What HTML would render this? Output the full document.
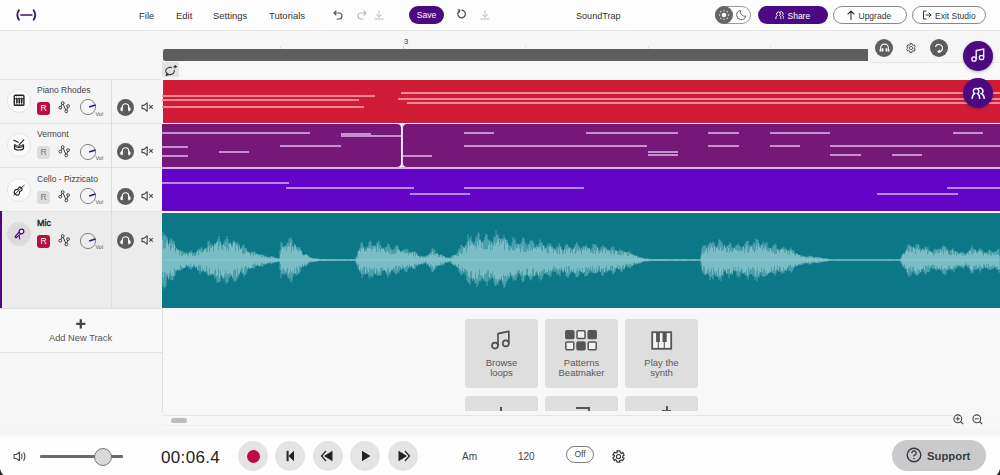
<!DOCTYPE html><html><head><meta charset="utf-8"><style>
*{margin:0;padding:0;box-sizing:border-box}
html,body{width:1000px;height:475px;overflow:hidden;background:#f6f6f6;font-family:"Liberation Sans",sans-serif;color:#333}
.a{position:absolute}
.menu{font-size:9.5px;color:#333;top:10px;line-height:11px}
.pill{border-radius:10px;height:18px;top:6px}
.tn{font-size:8.5px;color:#444;line-height:10px}
.rb{width:13px;height:13px;border-radius:3px;font-size:8.5px;line-height:13px;text-align:center;color:#fff;background:#b8103f}
.rg{background:#dcdcdc;color:#7a7a7a}
.circ{border-radius:50%}
</style></head><body>
<div class="a" style="left:0;top:0;width:1000px;height:31px;background:#fdfdfd;border-bottom:1px solid #e4e4e4"></div>
<svg class="a" style="left:14px;top:8px" width="26" height="14" viewBox="0 0 26 14">
 <path d="M5,2.3 Q1.6,7 5,11.7" stroke="#3a1266" stroke-width="1.8" fill="none" stroke-linecap="round"/>
 <path d="M7,7 H17.8" stroke="#3a1266" stroke-width="1.7" stroke-linecap="round"/>
 <path d="M19.6,2.3 Q23,7 19.6,11.7" stroke="#3a1266" stroke-width="1.8" fill="none" stroke-linecap="round"/>
</svg>
<div class="a menu" style="left:139px;">File</div>
<div class="a menu" style="left:176px;">Edit</div>
<div class="a menu" style="left:213px;">Settings</div>
<div class="a menu" style="left:269px;">Tutorials</div>
<div class="a menu" style="left:576px;font-size:9.1px;top:10.8px">SoundTrap</div>
<svg class="a" style="left:333px;top:10px" width="10" height="10" viewBox="0 0 10 10"><g><path d="M3,1 L1,3 L3,5 M1,3 H6 A3,3 0 0 1 6,9 H4" stroke="#555" stroke-width="1.1" fill="none" stroke-linecap="round" stroke-linejoin="round"/></g></svg>
<svg class="a" style="left:357px;top:10px" width="10" height="10" viewBox="0 0 10 10"><g transform="translate(10,0) scale(-1,1)"><path d="M3,1 L1,3 L3,5 M1,3 H6 A3,3 0 0 1 6,9 H4" stroke="#bbb" stroke-width="1.1" fill="none" stroke-linecap="round" stroke-linejoin="round"/></g></svg>
<svg class="a" style="left:374px;top:10px" width="10" height="10" viewBox="0 0 10 10"><path d="M5,1 V7 M2.5,4.5 L5,7 L7.5,4.5 M1,9 H9" stroke="#bbb" stroke-width="1" fill="none" stroke-linecap="round"/></svg>
<svg class="a" style="left:480px;top:10px" width="10" height="10" viewBox="0 0 10 10"><path d="M5,1 V7 M2.5,4.5 L5,7 L7.5,4.5 M1,9 H9" stroke="#bbb" stroke-width="1" fill="none" stroke-linecap="round"/></svg>
<div class="a pill" style="left:409px;width:35px;background:#4b0a82;color:#fff;font-size:8.6px;text-align:center;line-height:19.5px">Save</div>
<svg class="a" style="left:457px;top:9px" width="10" height="10" viewBox="0 0 10 10"><path d="M2,2.2 A3.8,3.8 0 1 0 5,1.2" stroke="#444" stroke-width="1.2" fill="none" stroke-linecap="round"/><path d="M1,0.8 L2.8,1 L2.6,3" stroke="#444" stroke-width="1.1" fill="none" stroke-linecap="round" stroke-linejoin="round"/></svg>
<div class="a" style="left:715px;top:6px;width:36px;height:18px;border-radius:9px;border:1px solid #999;background:#fff"></div>
<div class="a circ" style="left:715px;top:6px;width:18px;height:18px;background:#666"></div>
<svg class="a" style="left:717px;top:8px" width="14" height="14" viewBox="0 0 14 14"><circle cx="7" cy="7" r="2.3" fill="#f4f4f4"/><circle cx="11.50" cy="7.00" r="0.75" fill="#e0e0e0"/><circle cx="10.18" cy="10.18" r="0.75" fill="#e0e0e0"/><circle cx="7.00" cy="11.50" r="0.75" fill="#e0e0e0"/><circle cx="3.82" cy="10.18" r="0.75" fill="#e0e0e0"/><circle cx="2.50" cy="7.00" r="0.75" fill="#e0e0e0"/><circle cx="3.82" cy="3.82" r="0.75" fill="#e0e0e0"/><circle cx="7.00" cy="2.50" r="0.75" fill="#e0e0e0"/><circle cx="10.18" cy="3.82" r="0.75" fill="#e0e0e0"/></svg>
<svg class="a" style="left:735px;top:9px" width="12" height="12" viewBox="0 0 12 12"><path d="M5.5,1.5 A4.6,4.6 0 1 0 10.7,7.2 A4.6,4.6 0 0 1 5.5,1.5 Z" stroke="#666" stroke-width="1" fill="none" stroke-linejoin="round"/></svg>
<div class="a pill" style="left:758px;width:70px;background:#4b0a82"></div>
<svg class="a" style="left:774.5px;top:10.8px" width="9.84" height="8.2" viewBox="0 0 12 10"><path d="M1,9.5 C1,7 2,6 3,5.5 A2.3,2.3 0 1 1 5.5,5.5 C6.5,6 7.2,7 7.2,9.5 M6.2,1.2 A2.3,2.3 0 0 1 8.7,5.5 C9.7,6 11,7 11,9.5" stroke="#fff" stroke-width="1.2" fill="none" stroke-linecap="round"/></svg>
<div class="a" style="left:787.5px;top:10.5px;font-size:8.5px;color:#fff;line-height:10px">Share</div>
<div class="a pill" style="left:833px;width:74px;border:1px solid #888;background:#fff"></div>
<svg class="a" style="left:847px;top:10px" width="8" height="10" viewBox="0 0 8 10"><path d="M4,9.5 V1 M1,4 L4,1 L7,4" stroke="#333" stroke-width="1.1" fill="none" stroke-linecap="round"/></svg>
<div class="a" style="left:858.5px;top:10.5px;font-size:8.5px;color:#333;line-height:10px">Upgrade</div>
<div class="a pill" style="left:912px;width:74px;border:1px solid #888;background:#fff"></div>
<svg class="a" style="left:922px;top:10px" width="10" height="10" viewBox="0 0 10 10"><path d="M4,1 H1.5 V9 H4 M4,5 H9 M7,3 L9,5 L7,7" stroke="#333" stroke-width="1" fill="none" stroke-linecap="round" stroke-linejoin="round"/></svg>
<div class="a" style="left:935px;top:10.5px;font-size:8.5px;color:#333;line-height:10px">Exit Studio</div>
<div class="a" style="left:163px;top:49px;width:705px;height:12px;background:#5e5e5e;border-radius:2.5px 0 0 2.5px"></div>
<div class="a" style="left:179px;top:62px;width:821px;height:17px;background:#f8f8f8"></div>
<div class="a" style="left:868px;top:62px;width:132px;height:1px;background:#e6e6e6"></div>
<div class="a" style="left:280px;top:45.5px;width:1px;height:3.5px;background:#e2e2e2"></div>
<div class="a" style="left:402.5px;top:45.5px;width:1px;height:3.5px;background:#c8c8c8"></div>
<div class="a" style="left:525px;top:45.5px;width:1px;height:3.5px;background:#e2e2e2"></div>
<div class="a" style="left:647.5px;top:45.5px;width:1px;height:3.5px;background:#e2e2e2"></div>
<div class="a" style="left:770px;top:45.5px;width:1px;height:3.5px;background:#e2e2e2"></div>
<div class="a" style="left:404px;top:37.5px;font-size:7.5px;color:#333;line-height:8px">3</div>
<div class="a circ" style="left:875.2px;top:38.8px;width:18px;height:18px;background:#5e5e5e"></div>
<svg class="a" style="left:878.7px;top:43.3px" width="11" height="9" viewBox="0 0 11 9"><path d="M1.6,8.5 V5 A3.9,3.9 0 0 1 9.4,5 V8.5" stroke="#fff" stroke-width="1.1" fill="none"/><rect x="2.6" y="5.2" width="1.8" height="3.4" rx="0.4" fill="#fff"/><rect x="6.6" y="5.2" width="1.8" height="3.4" rx="0.4" fill="#fff"/><path d="M1.1,6 V8.6 M9.9,6 V8.6" stroke="#fff" stroke-width="1"/></svg>
<svg class="a" style="left:906.4px;top:42.9px" width="10" height="10" viewBox="0 0 10 10"><path d="M3.81,0.66 L6.19,0.66 L6.47,2.04 L7.40,2.73 L8.16,1.80 L9.35,3.86 L8.29,4.79 L8.16,5.94 L9.35,6.14 L8.16,8.20 L6.83,7.75 L5.77,8.21 L6.19,9.34 L3.81,9.34 L3.53,7.96 L2.60,7.27 L1.84,8.20 L0.65,6.14 L1.71,5.21 L1.84,4.06 L0.65,3.86 L1.84,1.80 L3.17,2.25 L4.23,1.79 Z" stroke="#555" stroke-width="1.0" fill="none" stroke-linejoin="round"/><circle cx="5.0" cy="5.0" r="1.60" stroke="#555" stroke-width="0.9" fill="none"/></svg>
<div class="a circ" style="left:930px;top:38.8px;width:18px;height:18px;background:#5e5e5e"></div>
<svg class="a" style="left:934px;top:43px" width="10" height="10" viewBox="0 0 10 10"><path d="M1.6,3.6 A3.6,3.6 0 1 1 4.6,8.7" stroke="#fff" stroke-width="1.1" fill="none" stroke-linecap="round"/><path d="M5.6,10 L3.8,8.6 L5.6,7.2" stroke="#fff" stroke-width="1.1" fill="none" stroke-linecap="round" stroke-linejoin="round"/></svg>
<div class="a" style="left:162px;top:62px;width:17px;height:15px;background:#e2e2e2;border-radius:0 0 2px 2px"></div>
<svg class="a" style="left:163.5px;top:63.5px" width="14" height="13" viewBox="0 0 14 13"><path d="M10.23,6.37 A4.3,3.6 0 1 1 7.47,3.62" stroke="#333" stroke-width="1.05" fill="none" stroke-linecap="round"/><path d="M3.2,9.3 L2.1,11.6 L5,10.5" stroke="#333" stroke-width="1.05" fill="none" stroke-linejoin="round" stroke-linecap="round"/><path d="M11.2,0.9 V4.3 M9.5,2.6 H12.9" stroke="#333" stroke-width="1.1"/></svg>
<div class="a" style="left:0;top:79px;width:162px;height:44px;background:#f5f5f5;border-top:1px solid #e2e2e2"></div>
<div class="a" style="left:111px;top:79px;width:1px;height:44px;background:#dedede"></div>
<div class="a circ" style="left:7px;top:89px;width:24px;height:24px;background:#fbfbfb;border:1px solid #e4e4e4"></div>
<svg class="a" style="left:12.5px;top:94px" width="12" height="12" viewBox="0 0 12 12"><rect x="1.3" y="1.3" width="9.6" height="10" rx="0.9" fill="#fff" stroke="#222" stroke-width="1.4"/><path d="M1.3,4.7 H10.9" stroke="#222" stroke-width="1"/><circle cx="3.6" cy="3" r="0.55" fill="#222"/><circle cx="6.1" cy="3" r="0.55" fill="#222"/><circle cx="8.6" cy="3" r="0.55" fill="#222"/><rect x="3.1" y="4.7" width="1.6" height="4.4" fill="#222"/><rect x="5.5" y="4.7" width="1.6" height="4.4" fill="#222"/><rect x="7.9" y="4.7" width="1.6" height="4.4" fill="#222"/><path d="M3.9,9 V11 M6.3,9 V11 M8.7,9 V11" stroke="#222" stroke-width="0.7"/></svg>
<div class="a tn" style="left:37px;top:85px;">Piano Rhodes</div>
<div class="a rb" style="left:37px;top:102px">R</div>
<svg class="a" style="left:58px;top:100px" width="12" height="14" viewBox="0 0 12 14"><path d="M2.3,7.7 L4.7,3.1 L8.3,11.4 L10.1,6.1" stroke="#3a3a3a" stroke-width="1" fill="none"/><circle cx="2.3" cy="7.7" r="1.4" fill="#f5f5f5" stroke="#3a3a3a" stroke-width="0.95"/><circle cx="4.7" cy="3.1" r="1.4" fill="#f5f5f5" stroke="#3a3a3a" stroke-width="0.95"/><circle cx="8.3" cy="11.4" r="1.4" fill="#f5f5f5" stroke="#3a3a3a" stroke-width="0.95"/><circle cx="10.1" cy="6.1" r="1.4" fill="#f5f5f5" stroke="#3a3a3a" stroke-width="0.95"/></svg>
<svg class="a" style="left:79px;top:98.4px" width="18" height="18" viewBox="0 0 18 18"><circle cx="9" cy="9" r="7.6" stroke="#777" stroke-width="0.9" fill="none"/><path d="M10.2,9 L16.5,7" stroke="#3a0a78" stroke-width="1.6"/></svg>
<div class="a" style="left:95.5px;top:110.5px;font-size:5.5px;color:#555;line-height:6px">Vol</div>
<div class="a circ" style="left:117px;top:99px;width:17px;height:17px;background:#5c5c5c"></div>
<svg class="a" style="left:119px;top:101px" width="13" height="12" viewBox="0 0 13 12"><path d="M3.3,9.5 V6 A3.2,3.2 0 0 1 9.7,6 V9.5" stroke="#fff" stroke-width="1.1" fill="none"/><path d="M3.3,5.8 Q1.2,6.5 1.2,8.3 Q1.2,10.2 3.5,10.5 Z M9.7,5.8 Q11.8,6.5 11.8,8.3 Q11.8,10.2 9.5,10.5 Z" fill="#fff"/></svg>
<svg class="a" style="left:141px;top:102px" width="13" height="10" viewBox="0 0 13 10"><path d="M1,3.4 H3 L6.2,0.8 V9.2 L3,6.6 H1 Z" stroke="#4a4a4a" stroke-width="1.15" fill="none" stroke-linejoin="round"/><path d="M8.3,3.2 L11.7,6.6 M11.7,3.2 L8.3,6.6" stroke="#4a4a4a" stroke-width="1.1"/></svg>
<div class="a" style="left:0;top:123px;width:162px;height:44px;background:#f5f5f5;border-top:1px solid #e2e2e2"></div>
<div class="a" style="left:111px;top:123px;width:1px;height:44px;background:#dedede"></div>
<div class="a circ" style="left:7px;top:133.4px;width:24px;height:24px;background:#fbfbfb;border:1px solid #e4e4e4"></div>
<svg class="a" style="left:13px;top:139.4px" width="12" height="12" viewBox="0 0 12 12"><path d="M1.5,5.5 V9 Q1.5,11 6,11 Q10.5,11 10.5,9 V5.5" stroke="#222" stroke-width="1.2" fill="none"/><path d="M1.5,7.6 Q6,9.6 10.5,7.6" stroke="#222" stroke-width="1" fill="none"/><path d="M2.6,5.2 Q1.5,5.8 2.5,6.6 Q6,7.8 9.5,6.6 Q10.5,5.8 9.4,5.2" stroke="#222" stroke-width="1" fill="none"/><path d="M0.8,1.2 L5.3,3.2 M10.8,0.8 L6.2,5.8" stroke="#222" stroke-width="1.1" stroke-linecap="round"/></svg>
<div class="a tn" style="left:37px;top:129.4px;">Vermont</div>
<div class="a rb rg" style="left:37px;top:146.4px">R</div>
<svg class="a" style="left:58px;top:144.4px" width="12" height="14" viewBox="0 0 12 14"><path d="M2.3,7.7 L4.7,3.1 L8.3,11.4 L10.1,6.1" stroke="#3a3a3a" stroke-width="1" fill="none"/><circle cx="2.3" cy="7.7" r="1.4" fill="#f5f5f5" stroke="#3a3a3a" stroke-width="0.95"/><circle cx="4.7" cy="3.1" r="1.4" fill="#f5f5f5" stroke="#3a3a3a" stroke-width="0.95"/><circle cx="8.3" cy="11.4" r="1.4" fill="#f5f5f5" stroke="#3a3a3a" stroke-width="0.95"/><circle cx="10.1" cy="6.1" r="1.4" fill="#f5f5f5" stroke="#3a3a3a" stroke-width="0.95"/></svg>
<svg class="a" style="left:79px;top:142.8px" width="18" height="18" viewBox="0 0 18 18"><circle cx="9" cy="9" r="7.6" stroke="#777" stroke-width="0.9" fill="none"/><path d="M10.2,9 L16.5,7" stroke="#3a0a78" stroke-width="1.6"/></svg>
<div class="a" style="left:95.5px;top:154.9px;font-size:5.5px;color:#555;line-height:6px">Vol</div>
<div class="a circ" style="left:117px;top:143.4px;width:17px;height:17px;background:#5c5c5c"></div>
<svg class="a" style="left:119px;top:145.4px" width="13" height="12" viewBox="0 0 13 12"><path d="M3.3,9.5 V6 A3.2,3.2 0 0 1 9.7,6 V9.5" stroke="#fff" stroke-width="1.1" fill="none"/><path d="M3.3,5.8 Q1.2,6.5 1.2,8.3 Q1.2,10.2 3.5,10.5 Z M9.7,5.8 Q11.8,6.5 11.8,8.3 Q11.8,10.2 9.5,10.5 Z" fill="#fff"/></svg>
<svg class="a" style="left:141px;top:146.4px" width="13" height="10" viewBox="0 0 13 10"><path d="M1,3.4 H3 L6.2,0.8 V9.2 L3,6.6 H1 Z" stroke="#4a4a4a" stroke-width="1.15" fill="none" stroke-linejoin="round"/><path d="M8.3,3.2 L11.7,6.6 M11.7,3.2 L8.3,6.6" stroke="#4a4a4a" stroke-width="1.1"/></svg>
<div class="a" style="left:0;top:167px;width:162px;height:44px;background:#f5f5f5;border-top:1px solid #e2e2e2"></div>
<div class="a" style="left:111px;top:167px;width:1px;height:44px;background:#dedede"></div>
<div class="a circ" style="left:7px;top:177.8px;width:24px;height:24px;background:#fbfbfb;border:1px solid #e4e4e4"></div>
<svg class="a" style="left:10.5px;top:182.10000000000002px" width="16" height="16" viewBox="0 0 16 16"><g transform="translate(8.2,8.1) rotate(45) translate(-3,-7.75)"><path d="M3,0.3 V5" stroke="#222" stroke-width="0.9"/><path d="M1.9,1.3 H4.1 M1.9,2.7 H4.1" stroke="#999" stroke-width="0.6"/><path d="M3,4.5 C4.6,4.5 5.1,5.6 4.9,6.8 C4.7,7.7 4.2,8.2 4.4,8.8 C5.6,9.3 6,10.3 5.8,11.5 C5.5,12.9 4.4,13.5 3,13.5 C1.6,13.5 0.5,12.9 0.2,11.5 C0,10.3 0.4,9.3 1.6,8.8 C1.8,8.2 1.3,7.7 1.1,6.8 C0.9,5.6 1.4,4.5 3,4.5 Z" stroke="#222" stroke-width="1.1" fill="#fff"/><path d="M3,5 V13.5 M3,13.5 V15.5" stroke="#222" stroke-width="0.9"/></g></svg>
<div class="a tn" style="left:37px;top:173.8px;">Cello - Pizzicato</div>
<div class="a rb rg" style="left:37px;top:190.8px">R</div>
<svg class="a" style="left:58px;top:188.8px" width="12" height="14" viewBox="0 0 12 14"><path d="M2.3,7.7 L4.7,3.1 L8.3,11.4 L10.1,6.1" stroke="#3a3a3a" stroke-width="1" fill="none"/><circle cx="2.3" cy="7.7" r="1.4" fill="#f5f5f5" stroke="#3a3a3a" stroke-width="0.95"/><circle cx="4.7" cy="3.1" r="1.4" fill="#f5f5f5" stroke="#3a3a3a" stroke-width="0.95"/><circle cx="8.3" cy="11.4" r="1.4" fill="#f5f5f5" stroke="#3a3a3a" stroke-width="0.95"/><circle cx="10.1" cy="6.1" r="1.4" fill="#f5f5f5" stroke="#3a3a3a" stroke-width="0.95"/></svg>
<svg class="a" style="left:79px;top:187.20000000000002px" width="18" height="18" viewBox="0 0 18 18"><circle cx="9" cy="9" r="7.6" stroke="#777" stroke-width="0.9" fill="none"/><path d="M10.2,9 L16.5,7" stroke="#3a0a78" stroke-width="1.6"/></svg>
<div class="a" style="left:95.5px;top:199.3px;font-size:5.5px;color:#555;line-height:6px">Vol</div>
<div class="a circ" style="left:117px;top:187.8px;width:17px;height:17px;background:#5c5c5c"></div>
<svg class="a" style="left:119px;top:189.8px" width="13" height="12" viewBox="0 0 13 12"><path d="M3.3,9.5 V6 A3.2,3.2 0 0 1 9.7,6 V9.5" stroke="#fff" stroke-width="1.1" fill="none"/><path d="M3.3,5.8 Q1.2,6.5 1.2,8.3 Q1.2,10.2 3.5,10.5 Z M9.7,5.8 Q11.8,6.5 11.8,8.3 Q11.8,10.2 9.5,10.5 Z" fill="#fff"/></svg>
<svg class="a" style="left:141px;top:190.8px" width="13" height="10" viewBox="0 0 13 10"><path d="M1,3.4 H3 L6.2,0.8 V9.2 L3,6.6 H1 Z" stroke="#4a4a4a" stroke-width="1.15" fill="none" stroke-linejoin="round"/><path d="M8.3,3.2 L11.7,6.6 M11.7,3.2 L8.3,6.6" stroke="#4a4a4a" stroke-width="1.1"/></svg>
<div class="a" style="left:0;top:211px;width:162px;height:97px;background:#ececec;border-top:1px solid #e2e2e2"></div>
<div class="a" style="left:111px;top:211px;width:1px;height:97px;background:#dedede"></div>
<div class="a circ" style="left:7px;top:222.3px;width:24px;height:24px;background:#dcdcdc;border:1px solid #dcdcdc"></div>
<svg class="a" style="left:13.5px;top:228.3px" width="11" height="12" viewBox="0 0 11 12"><path d="M5.3,4 L1.1,8.5 Q1.1,9.7 2.2,9.8 L6.9,5.6 Z" fill="#f3effa" stroke="#4b0a82" stroke-width="1.2" stroke-linejoin="round"/><circle cx="7.5" cy="3.4" r="2.3" fill="#fff" stroke="#4b0a82" stroke-width="1.3"/><path d="M5.2,8 L5.7,11" stroke="#4b0a82" stroke-width="1.1" stroke-linecap="round"/></svg>
<div class="a tn" style="left:37px;top:218.3px;color:#1a1a1a;-webkit-text-stroke:0.35px #1a1a1a;font-size:9px">Mic</div>
<div class="a rb" style="left:37px;top:235.3px">R</div>
<svg class="a" style="left:58px;top:233.3px" width="12" height="14" viewBox="0 0 12 14"><path d="M2.3,7.7 L4.7,3.1 L8.3,11.4 L10.1,6.1" stroke="#3a3a3a" stroke-width="1" fill="none"/><circle cx="2.3" cy="7.7" r="1.4" fill="#ececec" stroke="#3a3a3a" stroke-width="0.95"/><circle cx="4.7" cy="3.1" r="1.4" fill="#ececec" stroke="#3a3a3a" stroke-width="0.95"/><circle cx="8.3" cy="11.4" r="1.4" fill="#ececec" stroke="#3a3a3a" stroke-width="0.95"/><circle cx="10.1" cy="6.1" r="1.4" fill="#ececec" stroke="#3a3a3a" stroke-width="0.95"/></svg>
<svg class="a" style="left:79px;top:231.70000000000002px" width="18" height="18" viewBox="0 0 18 18"><circle cx="9" cy="9" r="7.6" stroke="#777" stroke-width="0.9" fill="none"/><path d="M10.2,9 L16.5,7" stroke="#3a0a78" stroke-width="1.6"/></svg>
<div class="a" style="left:95.5px;top:243.8px;font-size:5.5px;color:#555;line-height:6px">Vol</div>
<div class="a circ" style="left:117px;top:232.3px;width:17px;height:17px;background:#5c5c5c"></div>
<svg class="a" style="left:119px;top:234.3px" width="13" height="12" viewBox="0 0 13 12"><path d="M3.3,9.5 V6 A3.2,3.2 0 0 1 9.7,6 V9.5" stroke="#fff" stroke-width="1.1" fill="none"/><path d="M3.3,5.8 Q1.2,6.5 1.2,8.3 Q1.2,10.2 3.5,10.5 Z M9.7,5.8 Q11.8,6.5 11.8,8.3 Q11.8,10.2 9.5,10.5 Z" fill="#fff"/></svg>
<svg class="a" style="left:141px;top:235.3px" width="13" height="10" viewBox="0 0 13 10"><path d="M1,3.4 H3 L6.2,0.8 V9.2 L3,6.6 H1 Z" stroke="#4a4a4a" stroke-width="1.15" fill="none" stroke-linejoin="round"/><path d="M8.3,3.2 L11.7,6.6 M11.7,3.2 L8.3,6.6" stroke="#4a4a4a" stroke-width="1.1"/></svg>
<div class="a" style="left:0;top:211px;width:2px;height:97px;background:#4b0a82"></div>
<div class="a" style="left:0;top:308px;width:162px;height:45px;background:#f8f8f8;border-top:1px solid #e0e0e0;border-bottom:1px solid #e4e4e4"></div>
<svg class="a" style="left:75.6px;top:318.6px" width="10" height="10" viewBox="0 0 10 10"><path d="M4.8,0.3 V9.5 M0.2,4.9 H9.4" stroke="#444" stroke-width="2.3"/></svg>
<div class="a" style="left:49px;top:333px;font-size:9.3px;color:#555;line-height:11px">Add New Track</div>
<div class="a" style="left:162px;top:79px;width:1px;height:333px;background:#e0e0e0"></div>
<div class="a" style="left:162px;top:79px;width:838px;height:229px;background:#fff"></div>
<div class="a" style="left:162.5px;top:80px;width:838px;height:42.6px;background:#d11c37"></div>
<div class="a" style="left:162px;top:124px;width:239px;height:43px;background:#751878;border-radius:0 4px 4px 0"></div>
<div class="a" style="left:403px;top:124px;width:597px;height:43px;background:#751878;border-radius:4px 0 0 4px"></div>
<div class="a" style="left:162px;top:167px;width:838px;height:2px;background:#d9b5e3"></div>
<div class="a" style="left:401.6px;top:124px;width:1px;height:43px;background:#e6cfee"></div>
<div class="a" style="left:162px;top:169px;width:838px;height:42px;background:#6305c8"></div>
<div class="a" style="left:162px;top:213px;width:838px;height:94.5px;background:#0b7787"></div>
<div class="a" style="left:162px;top:95.0px;width:213px;height:2px;background:#f08898"></div>
<div class="a" style="left:162px;top:99.2px;width:197px;height:2px;background:#f08898"></div>
<div class="a" style="left:162px;top:105.6px;width:202px;height:2px;background:#f08898"></div>
<div class="a" style="left:401px;top:91.7px;width:599px;height:2px;background:#f08898"></div>
<div class="a" style="left:397.5px;top:98.0px;width:602.5px;height:2px;background:#f08898"></div>
<div class="a" style="left:407px;top:102.4px;width:593px;height:2px;background:#f08898"></div>
<div class="a" style="left:162px;top:131.7px;width:148px;height:2px;background:#c590cd"></div>
<div class="a" style="left:162px;top:145.6px;width:26px;height:2px;background:#c590cd"></div>
<div class="a" style="left:162px;top:154.5px;width:26px;height:2px;background:#c590cd"></div>
<div class="a" style="left:219px;top:151.4px;width:30px;height:2px;background:#c590cd"></div>
<div class="a" style="left:280px;top:145.3px;width:61px;height:2px;background:#c590cd"></div>
<div class="a" style="left:341px;top:133.0px;width:30px;height:2px;background:#c590cd"></div>
<div class="a" style="left:341px;top:135.0px;width:60px;height:2px;background:#c590cd"></div>
<div class="a" style="left:403px;top:154.5px;width:29px;height:2px;background:#c590cd"></div>
<div class="a" style="left:463.7px;top:131.6px;width:30.30000000000001px;height:2px;background:#c590cd"></div>
<div class="a" style="left:586px;top:131.6px;width:92px;height:2px;background:#c590cd"></div>
<div class="a" style="left:463.7px;top:145.4px;width:183.3px;height:2px;background:#c590cd"></div>
<div class="a" style="left:647.7px;top:150.5px;width:30.299999999999955px;height:2px;background:#c590cd"></div>
<div class="a" style="left:647.7px;top:154.4px;width:30.299999999999955px;height:2px;background:#c590cd"></div>
<div class="a" style="left:708px;top:131.8px;width:30.600000000000023px;height:2px;background:#c590cd"></div>
<div class="a" style="left:769.6px;top:131.8px;width:60.799999999999955px;height:2px;background:#c590cd"></div>
<div class="a" style="left:952.6px;top:131.8px;width:30.799999999999955px;height:2px;background:#c590cd"></div>
<div class="a" style="left:708px;top:145.2px;width:30.600000000000023px;height:2px;background:#c590cd"></div>
<div class="a" style="left:769.6px;top:145.2px;width:30.399999999999977px;height:2px;background:#c590cd"></div>
<div class="a" style="left:830.4px;top:145.2px;width:169.60000000000002px;height:2px;background:#c590cd"></div>
<div class="a" style="left:830.4px;top:154.2px;width:30.600000000000023px;height:2px;background:#c590cd"></div>
<div class="a" style="left:891.8px;top:154.2px;width:30.200000000000045px;height:2px;background:#c590cd"></div>
<div class="a" style="left:162px;top:182.2px;width:127px;height:2px;background:#b58ae4"></div>
<div class="a" style="left:285.8px;top:186.6px;width:128.0px;height:2px;background:#b58ae4"></div>
<div class="a" style="left:410.2px;top:192.7px;width:59.80000000000001px;height:2px;background:#b58ae4"></div>
<div class="a" style="left:463.7px;top:186.6px;width:120.00000000000006px;height:2px;background:#b58ae4"></div>
<div class="a" style="left:877.4px;top:192.7px;width:80.30000000000007px;height:2px;background:#b58ae4"></div>
<div class="a" style="left:946.7px;top:186.6px;width:53.299999999999955px;height:2px;background:#b58ae4"></div>
<svg class="a" style="left:0;top:0" width="1000" height="475" viewBox="0 0 1000 475">
<path d="M162.0,235.0V283.6M163.0,231.6V287.0M164.0,235.7V287.6M165.0,234.4V288.7M166.0,236.2V286.0M167.0,237.3V277.2M168.0,243.9V275.9M169.0,243.8V278.3M170.0,240.5V276.7M171.0,238.4V280.1M172.0,239.3V279.7M173.0,241.5V280.5M174.0,241.0V276.7M175.0,245.5V276.0M176.0,249.6V272.7M177.0,248.6V269.7M178.0,250.2V269.4M179.0,250.6V269.9M180.0,250.1V270.9M181.0,250.2V270.6M182.0,250.9V268.9M183.0,251.7V268.7M184.0,252.8V268.1M185.0,252.2V267.9M186.0,253.8V267.3M187.0,254.1V266.0M188.0,252.7V266.6M189.0,252.5V267.9M190.0,251.7V268.5M191.0,250.1V269.6M192.0,251.5V268.5M193.0,252.9V267.2M194.0,252.8V266.6M195.0,253.5V267.1M196.0,251.8V267.1M197.0,251.3V268.1M198.0,249.4V270.6M199.0,248.6V271.1M200.0,249.2V274.3M201.0,247.5V270.6M202.0,247.4V272.1M203.0,250.6V271.3M204.0,250.5V269.2M205.0,248.2V271.6M206.0,248.7V272.4M207.0,247.6V273.4M208.0,241.7V275.9M209.0,240.8V276.2M210.0,245.0V275.1M211.0,243.2V275.2M212.0,247.8V274.6M213.0,245.5V273.4M214.0,246.4V275.6M215.0,244.1V278.6M216.0,243.1V277.0M217.0,241.1V283.2M218.0,239.0V282.3M219.0,235.8V282.2M220.0,240.9V281.6M221.0,244.1V276.1M222.0,245.1V275.7M223.0,244.2V276.3M224.0,242.2V280.5M225.0,239.4V277.5M226.0,241.3V283.9M227.0,236.4V282.4M228.0,239.0V282.4M229.0,243.0V277.1M230.0,243.5V277.5M231.0,244.3V275.2M232.0,244.6V275.8M233.0,241.7V279.2M234.0,240.3V281.9M235.0,241.6V280.4M236.0,242.3V281.3M237.0,243.5V279.6M238.0,242.4V278.0M239.0,246.9V273.5M240.0,248.9V272.0M241.0,248.8V271.6M242.0,246.7V272.9M243.0,245.3V274.2M244.0,244.2V276.6M245.0,248.0V275.1M246.0,247.8V274.0M247.0,250.6V271.8M248.0,252.2V267.7M249.0,253.1V268.9M250.0,253.3V268.5M251.0,251.8V267.9M252.0,251.6V268.0M253.0,251.7V268.4M254.0,251.4V268.5M255.0,251.8V267.4M256.0,253.5V266.0M257.0,254.6V265.9M258.0,254.1V265.3M259.0,254.8V265.4M260.0,254.5V266.3M261.0,254.0V265.9M262.0,254.6V266.7M263.0,254.8V266.5M264.0,255.1V264.8M265.0,256.1V264.3M266.0,255.8V263.8M267.0,256.8V263.2M268.0,256.7V263.4M269.0,256.9V263.3M270.0,256.7V263.3M271.0,256.0V263.9M272.0,256.1V264.1M273.0,256.3V262.9M274.0,257.7V262.9M275.0,257.6V262.4M276.0,258.0V262.1M277.0,258.1V262.1M278.0,258.2V261.7M279.0,258.3V262.1M280.0,250.3V269.9M281.0,241.8V277.9M282.0,243.2V273.9M283.0,247.2V273.6M284.0,245.6V275.3M285.0,247.0V273.8M286.0,245.2V272.4M287.0,242.5V275.3M288.0,243.7V277.4M289.0,238.4V279.2M290.0,239.3V278.6M291.0,237.2V282.5M292.0,240.1V280.7M293.0,246.0V277.3M294.0,247.7V273.8M295.0,245.1V273.6M296.0,246.9V275.9M297.0,247.4V274.7M298.0,247.0V273.9M299.0,248.7V274.2M300.0,247.4V271.9M301.0,251.4V268.6M302.0,253.2V266.9M303.0,254.8V266.5M304.0,254.8V265.3M305.0,254.5V266.5M306.0,254.0V266.4M307.0,254.3V264.7M308.0,255.0V264.8M309.0,256.0V263.2M310.0,257.6V262.8M311.0,257.7V262.0M312.0,258.3V261.7M313.0,258.1V261.7M314.0,258.1V261.7M315.0,258.1V261.7M316.0,258.1V262.1M317.0,258.4V261.7M318.0,258.8V261.3M319.0,259.0V261.1M320.0,259.3V260.7M321.0,259.2V260.8M322.0,259.3V260.8M323.0,259.1V260.7M324.0,259.0V261.1M325.0,259.1V260.9M326.0,258.9V261.0M327.0,259.1V260.9M328.0,259.3V260.9M329.0,259.4V260.7M330.0,259.4V260.6M331.0,259.3V260.7M332.0,259.3V260.8M333.0,259.0V260.9M334.0,259.0V261.0M335.0,259.1V261.0M336.0,259.1V260.9M337.0,259.3V260.7M338.0,259.3V260.7M339.0,259.3V260.6M340.0,259.4V260.7M341.0,259.3V260.7M342.0,259.2V260.9M343.0,259.2V261.0M344.0,259.3V260.8M345.0,259.2V260.9M346.0,259.4V260.7M347.0,259.4V260.6M348.0,259.5V260.5M349.0,259.3V260.5M350.0,259.4V260.7M351.0,259.4V260.7M352.0,259.3V260.7M353.0,259.3V260.8M354.0,259.4V260.6M355.0,259.4V260.7M356.0,256.7V263.0M357.0,255.2V264.8M358.0,251.1V268.2M359.0,250.6V270.2M360.0,247.5V272.0M361.0,242.8V273.8M362.0,241.9V277.9M363.0,245.5V274.7M364.0,247.6V274.7M365.0,249.4V272.5M366.0,246.6V273.8M367.0,248.6V273.0M368.0,246.5V274.3M369.0,242.3V278.2M370.0,240.8V276.4M371.0,241.6V275.7M372.0,245.7V277.7M373.0,246.3V276.2M374.0,246.0V273.4M375.0,247.5V273.8M376.0,248.5V272.5M377.0,243.0V275.2M378.0,241.9V276.1M379.0,240.7V275.0M380.0,244.9V275.8M381.0,246.1V275.4M382.0,248.8V272.4M383.0,249.0V270.6M384.0,250.2V269.9M385.0,247.6V270.5M386.0,247.1V272.4M387.0,246.2V274.9M388.0,243.2V277.4M389.0,244.4V273.3M390.0,247.1V274.5M391.0,248.6V270.4M392.0,249.3V271.5M393.0,250.5V269.9M394.0,249.4V271.9M395.0,247.2V273.3M396.0,245.5V274.6M397.0,245.1V272.8M398.0,246.0V271.5M399.0,248.8V272.7M400.0,250.8V269.7M401.0,252.1V268.2M402.0,252.6V268.8M403.0,250.0V268.1M404.0,249.5V269.5M405.0,249.2V271.6M406.0,250.3V271.8M407.0,248.3V271.8M408.0,250.3V268.6M409.0,252.6V268.3M410.0,252.2V266.6M411.0,252.9V266.1M412.0,251.7V266.5M413.0,251.7V268.5M414.0,251.8V269.3M415.0,251.2V269.1M416.0,252.1V266.6M417.0,253.1V265.6M418.0,255.3V264.8M419.0,256.2V263.9M420.0,255.8V264.4M421.0,256.5V264.0M422.0,255.6V264.1M423.0,256.5V264.5M424.0,256.0V263.4M425.0,257.1V263.3M426.0,255.7V263.5M427.0,255.2V265.3M428.0,255.1V264.4M429.0,253.7V265.9M430.0,253.2V267.0M431.0,251.7V269.3M432.0,248.9V272.4M433.0,247.7V271.8M434.0,250.1V269.6M435.0,249.9V269.8M436.0,253.7V267.7M437.0,253.5V266.1M438.0,254.8V266.2M439.0,254.7V265.0M440.0,255.3V265.6M441.0,254.8V265.8M442.0,254.0V264.9M443.0,255.8V265.5M444.0,256.5V264.5M445.0,256.5V263.2M446.0,257.5V262.3M447.0,257.5V262.6M448.0,257.7V262.2M449.0,258.0V262.3M450.0,257.7V261.7M451.0,256.6V263.6M452.0,255.5V263.9M453.0,255.2V264.9M454.0,255.1V265.4M455.0,254.9V265.6M456.0,254.5V266.2M457.0,253.5V266.3M458.0,251.2V268.2M459.0,248.2V271.6M460.0,249.0V273.0M461.0,245.2V275.0M462.0,245.0V275.2M463.0,248.6V271.1M464.0,246.8V273.9M465.0,248.0V272.0M466.0,245.0V275.5M467.0,242.1V280.4M468.0,234.6V282.4M469.0,239.7V283.0M470.0,237.9V284.6M471.0,236.2V278.8M472.0,243.6V277.6M473.0,244.7V278.0M474.0,243.4V278.3M475.0,241.0V283.2M476.0,235.7V282.9M477.0,238.1V287.2M478.0,233.3V284.6M479.0,232.6V281.5M480.0,239.9V280.5M481.0,241.4V281.5M482.0,242.3V278.9M483.0,243.3V276.6M484.0,240.1V280.4M485.0,236.9V281.8M486.0,234.1V281.4M487.0,234.8V286.2M488.0,239.0V281.5M489.0,240.7V278.5M490.0,244.3V280.3M491.0,240.8V278.2M492.0,244.3V277.9M493.0,241.3V276.6M494.0,236.4V282.3M495.0,237.7V285.8M496.0,230.5V285.8M497.0,234.8V283.7M498.0,234.3V285.2M499.0,237.7V281.1M500.0,242.3V279.6M501.0,239.5V278.3M502.0,238.1V280.5M503.0,239.0V284.3M504.0,235.3V288.2M505.0,237.8V286.8M506.0,239.7V283.5M507.0,239.8V281.0M508.0,243.2V279.5M509.0,245.1V276.6M510.0,245.6V273.0M511.0,245.9V276.1M512.0,242.2V277.3M513.0,237.1V280.4M514.0,239.9V279.0M515.0,238.4V280.6M516.0,243.7V280.3M517.0,242.8V277.2M518.0,245.3V272.8M519.0,243.9V273.6M520.0,244.3V274.5M521.0,243.1V276.7M522.0,240.7V280.5M523.0,237.3V282.3M524.0,238.5V280.8M525.0,242.1V274.7M526.0,244.1V274.0M527.0,247.1V275.1M528.0,244.1V275.4M529.0,243.9V276.9M530.0,240.9V279.3M531.0,240.7V280.5M532.0,240.2V278.1M533.0,241.5V276.1M534.0,243.4V276.6M535.0,247.5V276.1M536.0,245.8V274.9M537.0,244.4V272.0M538.0,247.0V275.6M539.0,243.8V279.5M540.0,239.3V275.9M541.0,242.3V280.7M542.0,242.4V278.9M543.0,244.9V275.7M544.0,245.2V273.1M545.0,247.6V274.1M546.0,248.2V271.7M547.0,246.0V274.6M548.0,243.3V275.2M549.0,246.3V274.6M550.0,243.1V277.5M551.0,244.4V275.6M552.0,246.0V272.1M553.0,247.5V270.2M554.0,248.6V271.9M555.0,248.4V271.5M556.0,248.9V271.6M557.0,246.0V275.2M558.0,247.3V273.1M559.0,243.0V274.9M560.0,245.2V276.3M561.0,247.3V271.5M562.0,249.6V270.0M563.0,250.3V272.5M564.0,249.9V269.7M565.0,246.5V271.5M566.0,244.8V275.8M567.0,243.9V276.5M568.0,245.4V277.9M569.0,247.2V275.6M570.0,247.4V274.3M571.0,248.2V270.3M572.0,249.1V271.7M573.0,249.1V271.9M574.0,247.8V273.7M575.0,245.4V273.4M576.0,243.6V277.0M577.0,242.0V277.3M578.0,245.4V276.6M579.0,246.3V274.9M580.0,249.9V271.0M581.0,247.9V272.3M582.0,247.6V272.6M583.0,246.1V273.7M584.0,246.5V272.4M585.0,246.1V276.4M586.0,244.1V276.2M587.0,246.6V275.6M588.0,248.6V274.1M589.0,248.3V272.8M590.0,249.4V271.0M591.0,250.0V271.7M592.0,248.1V272.3M593.0,244.2V273.2M594.0,243.9V273.3M595.0,245.0V272.8M596.0,244.4V274.0M597.0,246.4V272.2M598.0,247.9V272.6M599.0,250.6V269.4M600.0,249.1V271.9M601.0,246.7V270.3M602.0,248.3V275.0M603.0,245.3V276.0M604.0,246.1V272.7M605.0,247.9V271.3M606.0,247.0V273.0M607.0,248.9V270.9M608.0,251.7V268.5M609.0,249.7V269.2M610.0,250.4V270.3M611.0,248.0V270.9M612.0,246.4V271.0M613.0,248.9V274.5M614.0,246.8V273.3M615.0,250.7V271.9M616.0,251.0V268.7M617.0,251.2V267.6M618.0,250.9V268.7M619.0,251.3V269.1M620.0,248.7V269.8M621.0,249.8V272.1M622.0,250.8V271.8M623.0,250.4V269.1M624.0,251.9V269.6M625.0,253.6V266.8M626.0,252.9V266.3M627.0,252.6V266.4M628.0,251.9V267.4M629.0,251.0V267.3M630.0,252.5V269.0M631.0,253.1V266.9M632.0,253.6V266.3M633.0,253.8V265.8M634.0,255.0V264.5M635.0,255.6V263.9M636.0,256.2V263.3M637.0,255.7V263.6M638.0,256.3V263.5M639.0,256.9V263.7M640.0,257.2V263.3M641.0,257.4V262.9M642.0,258.0V262.5M643.0,258.1V261.9M644.0,258.2V261.5M645.0,258.6V261.7M646.0,258.4V261.4M647.0,258.4V261.6M648.0,258.4V261.6M649.0,258.7V261.3M650.0,259.1V260.9M651.0,259.2V260.9M652.0,259.2V260.9M653.0,259.2V260.7M654.0,259.2V260.7M655.0,259.2V261.0M656.0,259.0V261.0M657.0,258.9V261.1M658.0,259.0V261.0M659.0,259.1V260.9M660.0,259.1V260.9M661.0,259.2V260.8M662.0,259.3V260.6M663.0,259.3V260.8M664.0,259.2V260.8M665.0,259.2V260.9M666.0,258.9V260.9M667.0,259.1V260.8M668.0,259.2V260.8M669.0,259.3V260.8M670.0,259.3V260.7M671.0,259.4V260.7M672.0,259.4V260.6M673.0,259.3V260.8M674.0,259.1V260.8M675.0,259.2V261.0M676.0,259.2V260.8M677.0,259.3V260.8M678.0,259.4V260.7M679.0,259.4V260.6M680.0,259.4V260.7M681.0,259.3V260.7M682.0,259.2V260.8M683.0,259.1V260.7M684.0,259.2V260.9M685.0,259.1V260.9M686.0,259.3V260.7M687.0,259.4V260.7M688.0,259.4V260.7M689.0,259.5V260.5M690.0,259.4V260.5M691.0,259.3V260.7M692.0,259.3V260.8M693.0,259.2V260.8M694.0,259.2V260.9M695.0,259.3V260.7M696.0,259.4V260.7M697.0,259.5V260.5M698.0,259.5V260.6M699.0,259.5V260.6M700.0,259.4V260.7M701.0,254.0V265.8M702.0,248.3V271.1M703.0,245.7V272.5M704.0,245.9V274.1M705.0,244.9V274.9M706.0,246.3V271.4M707.0,247.9V273.6M708.0,244.8V274.2M709.0,244.3V276.0M710.0,242.1V280.4M711.0,243.1V277.1M712.0,243.2V277.2M713.0,241.6V279.5M714.0,242.7V275.1M715.0,246.9V273.5M716.0,245.8V273.3M717.0,247.3V276.3M718.0,244.0V276.9M719.0,239.7V279.9M720.0,239.3V277.8M721.0,241.6V280.9M722.0,242.1V275.4M723.0,245.3V276.0M724.0,247.5V271.9M725.0,247.2V271.1M726.0,247.1V271.5M727.0,245.9V273.6M728.0,245.0V274.0M729.0,244.7V278.0M730.0,241.8V274.7M731.0,243.6V273.5M732.0,247.3V275.0M733.0,248.3V270.8M734.0,248.1V270.4M735.0,248.6V271.0M736.0,244.9V272.0M737.0,245.7V276.5M738.0,243.3V275.5M739.0,245.3V278.0M740.0,246.6V275.5M741.0,247.2V271.9M742.0,248.9V273.2M743.0,246.2V273.3M744.0,248.1V272.4M745.0,244.1V274.5M746.0,241.9V275.8M747.0,241.0V276.5M748.0,240.6V279.3M749.0,244.8V275.4M750.0,247.0V274.3M751.0,244.9V274.0M752.0,246.8V274.2M753.0,244.0V275.7M754.0,241.8V277.0M755.0,243.7V280.1M756.0,239.0V277.1M757.0,239.3V281.2M758.0,239.9V277.4M759.0,243.0V277.4M760.0,247.5V275.2M761.0,244.4V272.3M762.0,244.5V275.9M763.0,241.5V276.9M764.0,244.7V276.9M765.0,242.8V276.2M766.0,243.9V276.1M767.0,242.2V275.0M768.0,247.8V273.9M769.0,247.7V273.0M770.0,248.1V271.5M771.0,249.2V271.5M772.0,248.2V272.6M773.0,245.5V273.0M774.0,245.5V273.6M775.0,243.5V275.5M776.0,245.1V273.3M777.0,248.8V270.4M778.0,248.5V270.7M779.0,249.6V269.2M780.0,250.8V271.6M781.0,249.2V272.4M782.0,248.2V274.2M783.0,247.1V272.3M784.0,247.4V273.3M785.0,249.0V270.3M786.0,248.6V271.0M787.0,250.7V269.3M788.0,250.7V268.0M789.0,250.4V271.1M790.0,249.3V269.9M791.0,247.5V272.6M792.0,249.6V271.7M793.0,250.3V270.0M794.0,250.4V267.7M795.0,252.8V266.7M796.0,254.4V265.8M797.0,254.2V266.0M798.0,254.4V264.5M799.0,255.1V265.3M800.0,254.7V264.7M801.0,255.6V264.7M802.0,255.7V265.1M803.0,255.7V264.4M804.0,256.6V263.4M805.0,257.0V263.7M806.0,256.7V263.0M807.0,256.8V263.5M808.0,256.1V263.4M809.0,255.9V264.6M810.0,255.5V263.7M811.0,256.5V264.3M812.0,256.0V263.5M813.0,256.8V262.6M814.0,257.8V262.7M815.0,257.4V262.4M816.0,257.1V262.6M817.0,257.5V263.0M818.0,256.9V263.3M819.0,256.8V263.3M820.0,257.2V262.4M821.0,257.9V262.6M822.0,258.2V261.9M823.0,258.5V261.5M824.0,258.6V261.6M825.0,258.4V261.5M826.0,258.3V261.7M827.0,258.6V261.3M828.0,258.6V261.1M829.0,259.0V260.9M830.0,259.3V260.6M831.0,259.5V260.5M832.0,259.5V260.5M833.0,259.5V260.5M834.0,259.5V260.6M835.0,259.4V260.7M836.0,259.3V260.7M837.0,259.3V260.8M838.0,259.2V260.6M839.0,259.3V260.7M840.0,259.5V260.5M841.0,259.4V260.6M842.0,259.4V260.5M843.0,259.4V260.6M844.0,259.4V260.7M845.0,259.3V260.7M846.0,259.4V260.8M847.0,259.3V260.7M848.0,259.4V260.6M849.0,259.4V260.5M850.0,259.5V260.5M851.0,259.5V260.6M852.0,259.5V260.6M853.0,259.4V260.6M854.0,259.2V260.7M855.0,259.2V260.8M856.0,259.2V260.8M857.0,259.3V260.7M858.0,259.5V260.6M859.0,259.4V260.5M860.0,259.5V260.5M861.0,259.5V260.6M862.0,259.4V260.6M863.0,259.3V260.6M864.0,259.2V260.6M865.0,259.3V260.6M866.0,259.3V260.6M867.0,259.4V260.6M868.0,259.5V260.5M869.0,259.4V260.6M870.0,259.4V260.7M871.0,259.3V260.7M872.0,259.3V260.7M873.0,259.2V260.7M874.0,259.4V260.6M875.0,259.4V260.6M876.0,259.5V260.5M877.0,259.5V260.4M878.0,259.4V260.5M879.0,259.4V260.6M880.0,259.4V260.7M881.0,259.3V260.8M882.0,259.3V260.8M883.0,259.4V260.7M884.0,259.4V260.6M885.0,259.5V260.6M886.0,259.5V260.6M887.0,259.4V260.6M888.0,259.4V260.6M889.0,259.3V260.6M890.0,259.3V260.8M891.0,259.2V260.7M892.0,259.3V260.6M893.0,259.5V260.7M894.0,259.5V260.5M895.0,259.5V260.6M896.0,259.4V260.5M897.0,259.4V260.5M898.0,259.4V260.6M899.0,259.3V260.8M900.0,259.3V260.7M901.0,257.0V263.6M902.0,254.8V265.4M903.0,254.1V267.3M904.0,253.1V266.7M905.0,252.2V269.1M906.0,250.0V268.9M907.0,247.5V272.6M908.0,244.3V275.0M909.0,245.3V277.1M910.0,245.5V273.3M911.0,245.6V275.7M912.0,247.7V271.8M913.0,247.1V272.7M914.0,247.6V271.1M915.0,247.9V274.6M916.0,244.3V274.3M917.0,245.9V275.9M918.0,243.7V274.9M919.0,244.9V273.6M920.0,248.3V273.2M921.0,249.0V271.8M922.0,250.7V269.1M923.0,249.7V270.3M924.0,250.0V272.2M925.0,246.5V273.7M926.0,247.4V274.4M927.0,248.3V272.1M928.0,246.8V272.1M929.0,249.8V272.1M930.0,250.9V269.9M931.0,251.3V268.0M932.0,252.1V267.9M933.0,251.9V269.1M934.0,249.6V269.1M935.0,248.7V269.1M936.0,249.9V270.8M937.0,249.3V269.6M938.0,248.9V269.8M939.0,249.4V269.3M940.0,249.3V268.6M941.0,250.2V270.7M942.0,247.3V271.4M943.0,245.4V274.0M944.0,246.3V273.7M945.0,246.4V275.3M946.0,247.3V273.9M947.0,249.2V269.6M948.0,249.6V270.4M949.0,252.4V269.6M950.0,250.6V268.9M951.0,249.9V269.4M952.0,249.8V270.7M953.0,247.8V269.8M954.0,250.8V272.4M955.0,250.6V269.2M956.0,251.4V268.4M957.0,251.8V268.1M958.0,253.9V265.8M959.0,253.4V266.7M960.0,252.1V266.6M961.0,253.2V267.4M962.0,251.7V267.8M963.0,252.5V268.5M964.0,252.9V268.2M965.0,254.6V266.1M966.0,253.2V265.4M967.0,252.8V266.5M968.0,252.3V267.7M969.0,250.2V267.9M970.0,250.5V269.5M971.0,247.7V273.2M972.0,245.6V272.2M973.0,249.2V273.8M974.0,248.8V270.3M975.0,249.4V269.0M976.0,250.5V269.9M977.0,251.5V269.1M978.0,251.6V269.4M979.0,249.0V269.2M980.0,247.7V272.6M981.0,250.0V270.2M982.0,249.0V268.6M983.0,251.3V268.6M984.0,253.2V268.1M985.0,252.5V265.7M986.0,253.3V267.9M987.0,252.5V267.8M988.0,251.8V269.8M989.0,249.9V268.7M990.0,249.6V270.0M991.0,251.5V270.1M992.0,251.7V268.4M993.0,252.9V268.9M994.0,251.6V267.5M995.0,251.2V267.0M996.0,252.0V268.9M997.0,249.7V269.8M998.0,249.8V269.9M999.0,248.6V272.7" stroke="#b8e4e8" stroke-opacity="0.58" stroke-width="0.75" fill="none"/>
<path d="M162.5,239.8V272.0M163.5,248.5V277.7M164.5,248.6V271.7M165.5,248.1V273.2M166.5,242.6V275.1M167.5,239.5V273.4M168.5,246.7V279.5M169.5,243.1V273.7M170.5,250.3V271.4M171.5,248.1V274.9M172.5,243.8V275.2M173.5,247.5V275.9M174.5,244.2V268.0M175.5,252.3V270.5M176.5,248.2V270.3M177.5,249.7V269.6M178.5,249.7V270.9M179.5,255.2V268.4M180.5,251.9V265.4M181.5,256.0V266.1M182.5,256.0V267.5M183.5,254.5V267.8M184.5,253.8V267.7M185.5,255.2V265.4M186.5,252.3V264.1M187.5,255.6V265.5M188.5,256.7V265.1M189.5,252.8V266.1M190.5,254.1V263.4M191.5,253.0V266.7M192.5,256.1V266.3M193.5,255.4V264.4M194.5,256.2V264.5M195.5,256.0V268.3M196.5,254.6V265.9M197.5,251.1V269.6M198.5,255.1V265.0M199.5,250.6V265.5M200.5,252.1V265.6M201.5,251.8V271.0M202.5,253.3V267.4M203.5,251.3V270.4M204.5,249.1V272.1M205.5,248.7V270.7M206.5,251.7V265.9M207.5,252.1V271.2M208.5,246.5V273.9M209.5,251.9V268.2M210.5,248.2V274.1M211.5,247.6V273.7M212.5,244.9V273.9M213.5,251.2V274.4M214.5,243.4V271.1M215.5,245.4V269.2M216.5,243.2V275.9M217.5,241.9V274.8M218.5,250.4V268.4M219.5,245.9V278.5M220.5,242.2V271.0M221.5,248.8V275.0M222.5,250.0V278.5M223.5,245.2V278.3M224.5,246.2V274.2M225.5,246.9V270.3M226.5,249.8V273.4M227.5,248.3V273.8M228.5,250.7V274.1M229.5,243.8V273.5M230.5,242.4V272.7M231.5,246.7V275.2M232.5,247.1V277.7M233.5,242.4V270.6M234.5,243.6V269.3M235.5,251.4V270.3M236.5,244.8V276.3M237.5,246.5V268.7M238.5,251.0V275.7M239.5,244.6V274.1M240.5,249.1V269.4M241.5,247.9V266.4M242.5,253.8V268.6M243.5,253.8V273.0M244.5,253.8V267.4M245.5,253.0V266.1M246.5,249.8V266.6M247.5,251.8V268.9M248.5,251.6V266.9M249.5,252.4V268.5M250.5,255.7V268.3M251.5,253.5V268.3M252.5,253.9V264.8M253.5,256.2V264.4M254.5,253.3V264.7M255.5,255.3V263.3M256.5,253.9V265.4M257.5,253.4V263.4M258.5,255.3V266.0M259.5,254.8V266.2M260.5,255.0V264.8M261.5,257.3V262.9M262.5,256.9V262.8M263.5,255.3V264.1M264.5,257.1V263.3M265.5,257.4V264.4M266.5,257.5V264.2M267.5,258.2V262.7M268.5,257.9V262.8M269.5,258.2V262.5M270.5,257.9V262.0M271.5,257.1V262.7M272.5,257.9V261.9M273.5,257.5V262.4M274.5,257.4V262.2M275.5,258.7V261.9M276.5,257.9V262.1M277.5,258.2V261.8M278.5,259.0V261.3M279.5,258.7V261.4M280.5,254.3V263.5M281.5,249.7V270.6M282.5,247.4V268.5M283.5,247.2V268.4M284.5,248.9V270.2M285.5,246.1V272.5M286.5,251.5V269.5M287.5,247.3V267.5M288.5,246.0V274.2M289.5,247.2V272.3M290.5,243.1V269.9M291.5,251.8V272.8M292.5,247.0V271.1M293.5,250.1V273.6M294.5,243.7V268.6M295.5,245.4V273.0M296.5,249.6V266.6M297.5,250.7V268.2M298.5,252.3V271.3M299.5,249.6V265.8M300.5,250.2V266.2M301.5,250.7V267.1M302.5,255.1V263.8M303.5,255.7V266.9M304.5,255.3V263.6M305.5,254.5V265.3M306.5,254.9V263.9M307.5,256.1V263.2M308.5,257.6V261.8M309.5,257.7V262.1M310.5,257.3V261.6M311.5,258.1V261.7M312.5,258.7V262.2M313.5,258.0V262.1M314.5,258.9V261.0M315.5,259.0V261.0M316.5,258.6V261.1M317.5,259.1V260.9M318.5,258.8V260.6M319.5,259.0V260.6M320.5,259.4V260.6M321.5,259.2V260.4M322.5,259.2V260.6M323.5,259.4V260.8M324.5,259.1V260.5M325.5,259.4V260.7M326.5,259.3V260.7M327.5,259.6V260.7M328.5,259.3V260.5M329.5,259.3V260.7M330.5,259.4V260.6M331.5,259.4V260.4M332.5,259.2V260.6M333.5,259.5V260.5M334.5,259.5V260.4M335.5,259.5V260.5M336.5,259.6V260.4M337.5,259.4V260.4M338.5,259.5V260.4M339.5,259.3V260.4M340.5,259.6V260.7M341.5,259.6V260.5M342.5,259.6V260.5M343.5,259.6V260.3M344.5,259.3V260.7M345.5,259.3V260.4M346.5,259.4V260.3M347.5,259.6V260.4M348.5,259.6V260.4M349.5,259.3V260.4M350.5,259.4V260.5M351.5,259.6V260.6M352.5,259.4V260.3M353.5,259.4V260.3M354.5,259.4V260.4M355.5,259.6V260.4M356.5,258.0V262.9M357.5,257.3V265.3M358.5,251.3V264.0M359.5,249.9V270.0M360.5,252.1V268.3M361.5,248.5V271.1M362.5,248.8V268.9M363.5,247.4V266.9M364.5,251.7V266.9M365.5,251.0V274.4M366.5,251.4V267.1M367.5,247.7V270.1M368.5,248.4V272.0M369.5,248.0V267.5M370.5,248.7V269.6M371.5,251.4V268.6M372.5,248.5V269.3M373.5,249.1V268.6M374.5,244.9V267.5M375.5,246.1V274.5M376.5,252.4V268.2M377.5,245.7V269.6M378.5,251.4V272.9M379.5,248.8V271.4M380.5,252.6V267.9M381.5,248.6V267.8M382.5,248.6V267.6M383.5,247.8V270.3M384.5,251.0V270.2M385.5,252.9V271.1M386.5,251.9V272.9M387.5,251.6V268.8M388.5,251.7V267.1M389.5,254.4V272.0M390.5,251.6V271.7M391.5,254.5V269.2M392.5,254.1V269.6M393.5,253.8V267.2M394.5,254.1V268.4M395.5,253.6V265.9M396.5,251.9V265.4M397.5,249.3V268.9M398.5,250.2V266.2M399.5,250.1V265.9M400.5,252.2V267.0M401.5,251.1V270.0M402.5,251.0V264.8M403.5,252.1V267.6M404.5,253.2V267.7M405.5,253.2V266.7M406.5,253.1V265.5M407.5,253.4V265.1M408.5,255.2V266.3M409.5,253.4V264.2M410.5,252.4V267.8M411.5,253.8V265.6M412.5,252.5V268.1M413.5,255.8V267.6M414.5,253.1V263.9M415.5,256.7V264.4M416.5,253.9V263.8M417.5,255.7V265.8M418.5,255.9V263.5M419.5,257.3V265.0M420.5,257.5V264.2M421.5,256.5V262.8M422.5,257.0V263.7M423.5,257.2V262.3M424.5,256.9V262.4M425.5,258.2V261.4M426.5,256.5V262.2M427.5,256.2V264.0M428.5,257.2V263.2M429.5,254.7V266.9M430.5,253.2V263.8M431.5,255.2V266.1M432.5,251.7V265.9M433.5,254.8V269.7M434.5,255.4V267.5M435.5,254.2V265.1M436.5,253.9V265.1M437.5,252.9V266.3M438.5,256.9V264.9M439.5,257.2V265.3M440.5,254.8V262.8M441.5,256.4V264.0M442.5,257.2V262.8M443.5,256.2V263.6M444.5,256.6V262.8M445.5,258.0V261.8M446.5,258.0V262.8M447.5,257.6V261.7M448.5,257.8V261.8M449.5,257.9V261.2M450.5,259.0V261.0M451.5,257.7V261.7M452.5,257.9V263.4M453.5,256.4V264.4M454.5,255.5V264.9M455.5,255.2V263.8M456.5,256.6V266.8M457.5,256.0V267.7M458.5,255.9V264.1M459.5,251.8V268.4M460.5,253.1V269.6M461.5,254.4V271.0M462.5,253.5V267.2M463.5,247.1V272.6M464.5,247.9V269.1M465.5,245.9V269.0M466.5,252.2V270.2M467.5,248.0V271.5M468.5,241.9V275.5M469.5,246.3V277.5M470.5,244.8V271.5M471.5,241.3V271.1M472.5,241.6V281.0M473.5,244.6V279.2M474.5,246.1V279.9M475.5,246.6V272.5M476.5,248.9V277.7M477.5,241.7V279.4M478.5,245.5V274.4M479.5,239.7V269.8M480.5,239.7V275.5M481.5,247.9V274.9M482.5,241.8V276.9M483.5,249.0V279.1M484.5,248.9V274.2M485.5,249.5V274.4M486.5,248.9V272.4M487.5,249.4V270.6M488.5,245.3V270.6M489.5,240.4V276.9M490.5,250.2V272.9M491.5,242.9V273.8M492.5,249.7V271.4M493.5,246.1V278.6M494.5,242.9V275.0M495.5,245.4V278.8M496.5,243.0V279.2M497.5,240.7V281.3M498.5,238.6V279.1M499.5,245.4V278.8M500.5,238.8V280.3M501.5,244.1V276.3M502.5,241.3V282.0M503.5,240.5V274.6M504.5,250.0V276.1M505.5,239.6V275.4M506.5,244.8V277.2M507.5,242.1V274.5M508.5,249.3V275.8M509.5,250.6V278.4M510.5,249.4V271.9M511.5,248.0V274.8M512.5,250.0V275.2M513.5,250.1V275.8M514.5,251.0V275.5M515.5,247.6V273.3M516.5,248.8V274.0M517.5,247.7V270.6M518.5,244.2V271.1M519.5,248.7V270.1M520.5,252.4V274.6M521.5,249.5V272.2M522.5,246.1V271.0M523.5,251.9V275.5M524.5,251.2V275.5M525.5,252.4V276.6M526.5,251.6V268.8M527.5,249.3V268.8M528.5,251.0V275.8M529.5,246.3V275.8M530.5,250.8V273.8M531.5,248.6V275.6M532.5,250.5V268.6M533.5,248.4V268.6M534.5,247.8V275.2M535.5,248.5V272.4M536.5,249.4V271.0M537.5,247.0V273.0M538.5,246.7V275.6M539.5,248.3V271.5M540.5,246.4V272.7M541.5,249.8V271.2M542.5,251.3V270.7M543.5,246.1V269.3M544.5,249.1V269.0M545.5,248.0V273.2M546.5,251.1V271.3M547.5,253.4V272.2M548.5,253.4V268.6M549.5,246.6V270.9M550.5,247.0V270.7M551.5,248.8V270.4M552.5,249.2V269.2M553.5,253.0V266.0M554.5,249.7V268.2M555.5,250.5V267.3M556.5,252.2V268.6M557.5,254.0V269.6M558.5,248.6V269.8M559.5,254.3V268.5M560.5,247.1V269.2M561.5,249.5V267.3M562.5,254.2V270.8M563.5,253.5V272.3M564.5,248.8V267.7M565.5,253.7V271.7M566.5,248.6V266.5M567.5,250.6V272.9M568.5,248.7V266.0M569.5,247.9V266.5M570.5,252.9V272.4M571.5,251.3V270.2M572.5,253.0V271.9M573.5,249.4V269.0M574.5,247.0V271.8M575.5,253.7V273.2M576.5,251.6V270.5M577.5,249.6V268.2M578.5,251.3V271.1M579.5,248.0V268.0M580.5,250.9V270.3M581.5,253.8V272.1M582.5,249.9V267.9M583.5,249.1V272.7M584.5,250.1V271.7M585.5,247.3V267.5M586.5,250.8V267.3M587.5,248.4V269.1M588.5,248.6V267.4M589.5,247.8V269.5M590.5,252.9V267.1M591.5,251.7V269.8M592.5,253.3V266.0M593.5,253.6V270.2M594.5,250.1V268.1M595.5,254.2V272.7M596.5,250.4V267.4M597.5,247.7V271.0M598.5,252.7V265.8M599.5,253.9V265.9M600.5,251.3V272.2M601.5,250.4V268.2M602.5,252.8V269.3M603.5,250.1V268.0M604.5,248.2V272.0M605.5,253.1V267.6M606.5,249.3V265.5M607.5,250.6V271.6M608.5,250.0V271.2M609.5,251.2V269.9M610.5,253.4V265.8M611.5,253.6V265.8M612.5,250.7V266.1M613.5,253.8V270.6M614.5,254.4V267.5M615.5,250.2V268.5M616.5,250.5V267.4M617.5,254.2V264.8M618.5,254.8V269.3M619.5,254.9V265.8M620.5,254.9V266.8M621.5,255.3V269.2M622.5,252.6V265.1M623.5,254.9V264.9M624.5,251.4V268.2M625.5,252.1V263.9M626.5,252.0V263.6M627.5,255.9V263.5M628.5,255.9V265.2M629.5,254.4V263.8M630.5,254.0V263.9M631.5,254.8V264.8M632.5,255.1V265.2M633.5,256.8V262.8M634.5,255.5V262.5M635.5,255.5V264.6M636.5,255.7V263.2M637.5,257.8V263.7M638.5,257.7V262.8M639.5,257.8V262.3M640.5,257.6V262.5M641.5,258.4V262.2M642.5,257.7V261.7M643.5,258.4V261.0M644.5,258.9V261.0M645.5,259.2V260.9M646.5,259.3V261.2M647.5,258.8V260.7M648.5,259.4V260.6M649.5,259.4V260.5M650.5,259.3V260.8M651.5,259.2V260.5M652.5,259.4V260.6M653.5,259.4V260.9M654.5,259.5V260.5M655.5,259.2V260.8M656.5,259.6V260.6M657.5,259.5V260.6M658.5,259.4V260.4M659.5,259.6V260.4M660.5,259.2V260.7M661.5,259.2V260.4M662.5,259.3V260.5M663.5,259.3V260.5M664.5,259.2V260.5M665.5,259.6V260.6M666.5,259.5V260.6M667.5,259.6V260.4M668.5,259.5V260.5M669.5,259.3V260.6M670.5,259.6V260.7M671.5,259.4V260.5M672.5,259.6V260.6M673.5,259.7V260.5M674.5,259.4V260.5M675.5,259.5V260.7M676.5,259.3V260.5M677.5,259.5V260.6M678.5,259.3V260.6M679.5,259.5V260.6M680.5,259.3V260.5M681.5,259.4V260.5M682.5,259.3V260.4M683.5,259.4V260.6M684.5,259.5V260.5M685.5,259.4V260.5M686.5,259.4V260.4M687.5,259.5V260.4M688.5,259.5V260.5M689.5,259.6V260.5M690.5,259.3V260.4M691.5,259.3V260.4M692.5,259.7V260.3M693.5,259.4V260.6M694.5,259.5V260.5M695.5,259.6V260.5M696.5,259.5V260.5M697.5,259.6V260.5M698.5,259.4V260.5M699.5,259.4V260.4M700.5,259.7V260.4M701.5,256.5V262.4M702.5,251.9V268.9M703.5,254.2V266.6M704.5,252.9V267.1M705.5,250.3V275.2M706.5,249.7V273.6M707.5,253.1V269.5M708.5,247.2V268.6M709.5,250.6V272.8M710.5,247.7V270.8M711.5,245.9V268.1M712.5,247.9V274.8M713.5,252.1V267.4M714.5,245.9V270.7M715.5,251.6V276.1M716.5,248.4V271.0M717.5,247.2V276.3M718.5,250.5V267.6M719.5,250.0V275.4M720.5,247.5V275.8M721.5,250.8V270.5M722.5,250.4V274.7M723.5,251.0V268.3M724.5,244.8V269.3M725.5,248.8V270.0M726.5,252.4V273.6M727.5,251.9V268.9M728.5,248.1V269.3M729.5,252.9V268.6M730.5,250.2V273.0M731.5,251.0V271.9M732.5,252.2V273.6M733.5,250.4V267.1M734.5,247.1V270.5M735.5,249.5V267.5M736.5,250.1V270.1M737.5,251.0V271.1M738.5,250.8V266.8M739.5,251.2V271.5M740.5,250.8V270.3M741.5,251.1V268.2M742.5,251.2V269.8M743.5,246.1V273.7M744.5,253.2V272.3M745.5,249.8V272.3M746.5,245.9V269.8M747.5,252.2V274.8M748.5,252.7V267.3M749.5,250.3V270.4M750.5,247.2V268.7M751.5,246.4V269.4M752.5,249.7V267.1M753.5,250.2V267.6M754.5,252.3V269.5M755.5,250.8V275.8M756.5,246.2V271.0M757.5,250.0V268.2M758.5,243.8V273.9M759.5,246.6V271.7M760.5,248.5V272.3M761.5,245.5V267.7M762.5,250.4V272.2M763.5,248.0V269.3M764.5,249.4V268.7M765.5,247.0V272.7M766.5,248.9V270.5M767.5,251.0V274.0M768.5,250.9V273.1M769.5,252.4V271.6M770.5,247.8V272.7M771.5,251.2V267.6M772.5,252.6V271.2M773.5,251.9V269.2M774.5,253.9V265.7M775.5,253.9V270.5M776.5,253.8V268.9M777.5,250.9V265.4M778.5,250.4V271.7M779.5,253.1V266.2M780.5,249.1V267.2M781.5,249.2V271.3M782.5,249.4V270.0M783.5,249.6V267.2M784.5,252.6V270.4M785.5,251.4V269.0M786.5,249.4V270.9M787.5,254.2V266.7M788.5,250.9V265.8M789.5,254.7V265.0M790.5,250.9V264.7M791.5,251.1V266.9M792.5,253.1V266.4M793.5,252.8V268.0M794.5,255.0V265.7M795.5,255.8V263.7M796.5,253.1V266.6M797.5,253.8V265.0M798.5,255.3V264.5M799.5,255.0V263.6M800.5,257.2V264.2M801.5,256.4V263.0M802.5,257.2V263.3M803.5,256.8V262.8M804.5,256.1V263.1M805.5,257.7V262.0M806.5,257.2V263.0M807.5,258.1V262.8M808.5,257.5V261.8M809.5,257.3V263.1M810.5,256.4V263.0M811.5,257.7V261.8M812.5,257.1V261.7M813.5,258.2V262.1M814.5,258.3V261.9M815.5,257.2V262.4M816.5,257.3V262.7M817.5,258.3V262.4M818.5,258.7V261.7M819.5,257.9V261.2M820.5,258.2V262.1M821.5,258.1V261.3M822.5,258.0V261.6M823.5,259.0V261.8M824.5,258.9V261.6M825.5,258.3V261.3M826.5,258.5V260.7M827.5,259.0V261.2M828.5,259.4V261.0M829.5,259.4V260.5M830.5,259.4V260.5M831.5,259.6V260.6M832.5,259.7V260.4M833.5,259.6V260.4M834.5,259.6V260.3M835.5,259.7V260.3M836.5,259.6V260.5M837.5,259.5V260.6M838.5,259.5V260.5M839.5,259.5V260.5M840.5,259.4V260.6M841.5,259.6V260.5M842.5,259.5V260.4M843.5,259.7V260.4M844.5,259.6V260.4M845.5,259.6V260.3M846.5,259.6V260.4M847.5,259.7V260.3M848.5,259.5V260.5M849.5,259.4V260.5M850.5,259.5V260.6M851.5,259.6V260.6M852.5,259.4V260.4M853.5,259.7V260.4M854.5,259.6V260.3M855.5,259.5V260.3M856.5,259.5V260.3M857.5,259.6V260.3M858.5,259.4V260.5M859.5,259.6V260.5M860.5,259.5V260.4M861.5,259.7V260.5M862.5,259.5V260.4M863.5,259.4V260.5M864.5,259.5V260.5M865.5,259.7V260.3M866.5,259.4V260.4M867.5,259.5V260.5M868.5,259.5V260.4M869.5,259.5V260.4M870.5,259.6V260.4M871.5,259.7V260.3M872.5,259.5V260.4M873.5,259.5V260.3M874.5,259.7V260.5M875.5,259.4V260.4M876.5,259.5V260.6M877.5,259.5V260.4M878.5,259.5V260.4M879.5,259.6V260.6M880.5,259.7V260.5M881.5,259.7V260.5M882.5,259.4V260.5M883.5,259.6V260.4M884.5,259.5V260.5M885.5,259.6V260.5M886.5,259.4V260.4M887.5,259.6V260.4M888.5,259.7V260.5M889.5,259.5V260.6M890.5,259.6V260.5M891.5,259.4V260.6M892.5,259.7V260.6M893.5,259.7V260.5M894.5,259.5V260.3M895.5,259.5V260.6M896.5,259.6V260.6M897.5,259.5V260.4M898.5,259.7V260.6M899.5,259.7V260.4M900.5,259.7V260.5M901.5,257.8V261.5M902.5,254.9V263.4M903.5,253.3V266.1M904.5,254.7V264.3M905.5,252.8V268.1M906.5,250.7V269.1M907.5,250.3V271.7M908.5,251.9V267.6M909.5,251.6V268.4M910.5,246.7V265.9M911.5,252.0V270.8M912.5,252.1V267.2M913.5,246.6V266.6M914.5,248.8V270.4M915.5,254.0V271.8M916.5,249.6V273.5M917.5,248.6V268.7M918.5,250.4V270.2M919.5,249.8V269.6M920.5,252.6V272.0M921.5,250.9V268.8M922.5,248.2V269.0M923.5,249.2V266.9M924.5,251.7V269.5M925.5,249.2V265.4M926.5,249.8V265.8M927.5,254.5V267.1M928.5,252.5V265.3M929.5,251.2V267.3M930.5,251.1V265.4M931.5,252.7V265.7M932.5,253.6V264.4M933.5,255.5V265.1M934.5,254.3V265.3M935.5,252.9V268.2M936.5,251.6V267.4M937.5,253.1V266.4M938.5,253.0V268.4M939.5,252.8V268.4M940.5,248.7V269.7M941.5,252.5V265.7M942.5,250.8V269.0M943.5,254.5V269.5M944.5,249.1V268.0M945.5,252.0V268.4M946.5,250.7V269.8M947.5,250.8V268.4M948.5,254.5V266.1M949.5,254.7V265.2M950.5,255.2V268.5M951.5,255.3V268.3M952.5,250.2V268.8M953.5,254.1V266.9M954.5,254.5V265.4M955.5,251.8V266.7M956.5,255.9V265.3M957.5,252.3V264.9M958.5,254.0V265.3M959.5,254.0V265.1M960.5,252.7V265.7M961.5,254.6V264.9M962.5,255.8V266.3M963.5,253.9V265.2M964.5,255.5V266.1M965.5,255.0V262.9M966.5,254.6V263.8M967.5,253.1V265.6M968.5,254.8V264.8M969.5,251.1V265.2M970.5,251.1V269.8M971.5,253.7V270.3M972.5,254.5V269.7M973.5,253.1V266.5M974.5,251.6V265.8M975.5,250.1V265.7M976.5,253.1V264.8M977.5,254.2V267.6M978.5,251.5V266.8M979.5,251.2V264.9M980.5,250.9V266.9M981.5,252.1V266.6M982.5,253.7V268.2M983.5,255.8V264.4M984.5,252.4V264.7M985.5,253.8V267.9M986.5,253.4V263.8M987.5,255.2V267.1M988.5,254.9V264.0M989.5,253.6V267.5M990.5,256.0V266.3M991.5,255.5V266.7M992.5,252.8V264.7M993.5,254.4V268.2M994.5,255.2V264.5M995.5,253.4V266.8M996.5,255.0V266.9M997.5,254.8V266.3M998.5,254.5V268.9M999.5,255.7V269.4" stroke="#b8e4e8" stroke-opacity="0.58" stroke-width="0.75" fill="none"/>
<path d="M162,260H1000" stroke="#9ad6dc" stroke-width="0.8" stroke-opacity="0.7"/>
</svg>
<div class="a circ" style="left:963px;top:40.5px;width:30px;height:30px;background:#4b0a82;box-shadow:0 1px 3px rgba(0,0,0,0.3)"></div>
<div class="a circ" style="left:963px;top:78px;width:30px;height:30px;background:#4b0a82;box-shadow:0 1px 3px rgba(0,0,0,0.3)"></div>
<svg class="a" style="left:970px;top:47px" width="16" height="16" viewBox="0 0 16 16"><circle cx="4" cy="12" r="2.2" stroke="#fff" stroke-width="1.3" fill="none"/><circle cx="11.5" cy="10.5" r="2.2" stroke="#fff" stroke-width="1.3" fill="none"/><path d="M6.2,12 V3.5 L13.7,2 V10.5" stroke="#fff" stroke-width="1.3" fill="none"/></svg>
<svg class="a" style="left:971px;top:87px" width="14.399999999999999" height="12.0" viewBox="0 0 12 10"><path d="M1,9.5 C1,7 2,6 3,5.5 A2.3,2.3 0 1 1 5.5,5.5 C6.5,6 7.2,7 7.2,9.5 M6.2,1.2 A2.3,2.3 0 0 1 8.7,5.5 C9.7,6 11,7 11,9.5" stroke="#fff" stroke-width="1.2" fill="none" stroke-linecap="round"/></svg>
<div class="a" style="left:163px;top:308px;width:837px;height:107px;background:#f8f8f8"></div>
<div class="a" style="left:465px;top:319px;width:73px;height:69px;background:#dedede;border-radius:3px"></div>
<div class="a" style="left:465px;top:396px;width:73px;height:16px;background:#dedede;border-radius:3px 3px 0 0"></div>
<div class="a" style="left:465px;top:358.3px;width:73px;text-align:center;font-size:9.5px;line-height:10px;color:#5a5a5a">Browse<br>loops</div>
<div class="a" style="left:545px;top:319px;width:73px;height:69px;background:#dedede;border-radius:3px"></div>
<div class="a" style="left:545px;top:396px;width:73px;height:16px;background:#dedede;border-radius:3px 3px 0 0"></div>
<div class="a" style="left:545px;top:358.3px;width:73px;text-align:center;font-size:9.5px;line-height:10px;color:#5a5a5a">Patterns<br>Beatmaker</div>
<div class="a" style="left:625px;top:319px;width:73px;height:69px;background:#dedede;border-radius:3px"></div>
<div class="a" style="left:625px;top:396px;width:73px;height:16px;background:#dedede;border-radius:3px 3px 0 0"></div>
<div class="a" style="left:625px;top:358.3px;width:73px;text-align:center;font-size:9.5px;line-height:10px;color:#5a5a5a">Play the<br>synth</div>
<svg class="a" style="left:490px;top:330px" width="21" height="21" viewBox="0 0 21 21"><circle cx="5" cy="15.6" r="3" stroke="#4a4a4a" stroke-width="1.6" fill="none"/><circle cx="15.8" cy="13.4" r="3" stroke="#4a4a4a" stroke-width="1.6" fill="none"/><path d="M8,15.6 V3.6 L18.8,1.4 V13.4" stroke="#4a4a4a" stroke-width="1.6" fill="none" stroke-linejoin="round"/></svg>
<svg class="a" style="left:565.3px;top:329.8px" width="33" height="21" viewBox="0 0 33 21"><rect x="0.8" y="0.8" width="8" height="7.7" rx="1.1" fill="#555" stroke="#555" stroke-width="1.5"/><rect x="0.8" y="12.0" width="8" height="7.7" rx="1.1" fill="#f0f0f0" stroke="#555" stroke-width="1.5"/><rect x="12.0" y="0.8" width="8" height="7.7" rx="1.1" fill="#f0f0f0" stroke="#555" stroke-width="1.5"/><rect x="12.0" y="12.0" width="8" height="7.7" rx="1.1" fill="#555" stroke="#555" stroke-width="1.5"/><rect x="23.2" y="0.8" width="8" height="7.7" rx="1.1" fill="#555" stroke="#555" stroke-width="1.5"/><rect x="23.2" y="12.0" width="8" height="7.7" rx="1.1" fill="#f0f0f0" stroke="#555" stroke-width="1.5"/></svg>
<svg class="a" style="left:650.5px;top:330.5px" width="22" height="19" viewBox="0 0 22 19"><rect x="1.2" y="1.2" width="19" height="16.6" fill="#f4f4f4" stroke="#555" stroke-width="1.8"/><path d="M7.3,1V18 M13.3,1V18" stroke="#555" stroke-width="1.1"/><rect x="5.1" y="1" width="3.8" height="10" fill="#555"/><rect x="11.5" y="1" width="4.2" height="10" fill="#555"/></svg>
<div class="a" style="left:500px;top:407px;width:2px;height:5px;background:#555"></div>
<div class="a" style="left:576px;top:407px;width:14px;height:2px;background:#555"></div><div class="a" style="left:588px;top:407px;width:2px;height:5px;background:#555"></div>
<div class="a" style="left:665.5px;top:406px;width:2px;height:6px;background:#555"></div><div class="a" style="left:662px;top:410px;width:9px;height:2px;background:#555"></div>
<div class="a" style="left:163px;top:411px;width:837px;height:24px;background:#f7f7f7"></div>
<div class="a" style="left:163px;top:415px;width:790px;height:1px;background:#e6e6e6"></div>
<div class="a" style="left:163px;top:425px;width:790px;height:1px;background:#eeeeee"></div>
<div class="a" style="left:171px;top:418px;width:16px;height:5px;border-radius:3px;background:#bdbdbd"></div>
<svg class="a" style="left:953px;top:414px" width="11" height="11" viewBox="0 0 11 11"><circle cx="4.8" cy="4.8" r="3.9" stroke="#444" stroke-width="1.1" fill="none"/><path d="M7.6,7.6 L10.2,10.2" stroke="#444" stroke-width="1.2"/><path d="M2.8,4.8 H6.8 M4.8,2.8 V6.8" stroke="#444" stroke-width="1"/></svg>
<svg class="a" style="left:972px;top:414px" width="11" height="11" viewBox="0 0 11 11"><circle cx="4.8" cy="4.8" r="3.9" stroke="#444" stroke-width="1.1" fill="none"/><path d="M7.6,7.6 L10.2,10.2" stroke="#444" stroke-width="1.2"/><path d="M2.8,4.8 H6.8" stroke="#444" stroke-width="1"/></svg>
<div class="a" style="left:0;top:428px;width:1000px;height:47px;background:linear-gradient(#f7f7f7,#f3f3f3 5px,#fafafa 9px,#fefefe 13px,#fefefe)"></div>
<svg class="a" style="left:12.5px;top:450.5px" width="14" height="11" viewBox="0 0 13 10"><path d="M1,3.2 H3 L6,1 V9 L3,6.8 H1 Z" stroke="#444" stroke-width="1" fill="none" stroke-linejoin="round"/><path d="M8,3 Q9,5 8,7 M10,1.5 Q12,5 10,8.5" stroke="#444" stroke-width="1" fill="none" stroke-linecap="round"/></svg>
<div class="a" style="left:40px;top:455px;width:83px;height:2.5px;background:#6b6b6b;border-radius:1px"></div>
<div class="a circ" style="left:94px;top:448px;width:18px;height:18px;background:#d9d9d9;border:1.8px solid #777"></div>
<div class="a" style="left:161px;top:448.8px;font-size:17px;color:#222;line-height:18px;letter-spacing:0.35px">00:06.4</div>
<div class="a circ" style="left:238px;top:441px;width:30px;height:30px;background:#e4e4e4"></div>
<div class="a circ" style="left:275px;top:441px;width:30px;height:30px;background:#e4e4e4"></div>
<div class="a circ" style="left:313px;top:441px;width:30px;height:30px;background:#e4e4e4"></div>
<div class="a circ" style="left:350px;top:441px;width:30px;height:30px;background:#e4e4e4"></div>
<div class="a circ" style="left:388px;top:441px;width:30px;height:30px;background:#e4e4e4"></div>
<div class="a circ" style="left:246.5px;top:449.5px;width:13px;height:13px;background:#c0084a"></div>
<svg class="a" style="left:285px;top:450px" width="10" height="12" viewBox="0 0 10 12"><rect x="1.6" y="0.8" width="2" height="10.4" fill="#222"/><path d="M9,0.8 V11.2 L3.5,6 Z" fill="#222"/></svg>
<svg class="a" style="left:320px;top:450px" width="14" height="12" viewBox="0 0 14 12"><path d="M6,1 L1.5,6 L6,11" stroke="#222" stroke-width="1.2" fill="none"/><path d="M12.5,0.8 V11.2 L4,6 Z" fill="#222"/></svg>
<svg class="a" style="left:361px;top:450px" width="10" height="12" viewBox="0 0 10 12"><path d="M1,0.8 V11.2 L9.5,6 Z" fill="#222"/></svg>
<svg class="a" style="left:397px;top:450px" width="14" height="12" viewBox="0 0 14 12"><path d="M8,1 L12.5,6 L8,11" stroke="#222" stroke-width="1.2" fill="none"/><path d="M1.5,0.8 V11.2 L10,6 Z" fill="#222"/></svg>
<div class="a" style="left:462px;top:451px;font-size:10px;color:#444;line-height:11px">Am</div>
<div class="a" style="left:518px;top:451px;font-size:10px;color:#444;line-height:11px">120</div>
<div class="a" style="left:566px;top:446px;width:28px;height:17px;border-radius:9px;border:1px solid #777;background:#fff;font-size:8.5px;line-height:14px;text-align:center;color:#444">Off</div>
<svg class="a" style="left:611.9px;top:449.5px" width="13" height="13" viewBox="0 0 13 13"><path d="M4.95,0.86 L8.05,0.86 L8.41,2.66 L9.61,3.55 L10.61,2.34 L12.16,5.02 L10.78,6.23 L10.61,7.72 L12.16,7.98 L10.61,10.66 L8.87,10.07 L7.50,10.67 L8.05,12.14 L4.95,12.14 L4.59,10.34 L3.39,9.45 L2.39,10.66 L0.84,7.98 L2.22,6.77 L2.39,5.28 L0.84,5.02 L2.39,2.34 L4.13,2.93 L5.50,2.33 Z" stroke="#333" stroke-width="1.15" fill="none" stroke-linejoin="round"/><circle cx="6.5" cy="6.5" r="2.08" stroke="#333" stroke-width="1.035" fill="none"/></svg>
<div class="a" style="left:892px;top:440px;width:94px;height:31px;border-radius:16px;background:#cacacd"></div>
<svg class="a" style="left:906px;top:447px" width="16" height="16" viewBox="0 0 16 16"><circle cx="8" cy="8" r="6.8" stroke="#3a3a3e" stroke-width="1.4" fill="none"/><path d="M5.8,6.2 A2.2,2.2 0 1 1 8,8.3 V9.5" stroke="#3a3a3e" stroke-width="1.3" fill="none"/><circle cx="8" cy="11.6" r="0.8" fill="#3a3a3e"/></svg>
<div class="a" style="left:927px;top:450px;font-size:11.3px;font-weight:bold;color:#3d3d42;line-height:13px">Support</div>
<svg class="a" style="left:0;top:465px" width="6" height="10" viewBox="0 0 6 10"><path d="M0,4 Q1,8 3.5,10 L0,10 Z" fill="#222"/></svg>
<svg class="a" style="left:994px;top:465px" width="6" height="10" viewBox="0 0 6 10"><path d="M6,4 Q5,8 2.5,10 L6,10 Z" fill="#222"/></svg>
</body></html>
